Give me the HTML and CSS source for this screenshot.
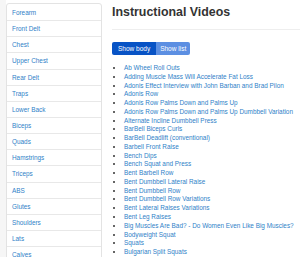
FILE: index.html
```html
<!DOCTYPE html>
<html>
<head>
<meta charset="utf-8">
<link rel="stylesheet" href="styles.css">
</head>
<body>
<div class="page">
  <aside class="side">
    <ul class="nav">
      <li><a href="#">Forearm</a></li>
      <li><a href="#">Front Delt</a></li>
      <li><a href="#">Chest</a></li>
      <li><a href="#">Upper Chest</a></li>
      <li><a href="#">Rear Delt</a></li>
      <li><a href="#">Traps</a></li>
      <li><a href="#">Lower Back</a></li>
      <li><a href="#">Biceps</a></li>
      <li><a href="#">Quads</a></li>
      <li><a href="#">Hamstrings</a></li>
      <li><a href="#">Triceps</a></li>
      <li><a href="#">ABS</a></li>
      <li><a href="#">Glutes</a></li>
      <li><a href="#">Shoulders</a></li>
      <li><a href="#">Lats</a></li>
      <li><a href="#">Calves</a></li>
    </ul>
  </aside>
  <main class="main">
    <h1 class="title">Instructional Videos</h1>
    <div class="btns">
      <button class="btn active">Show body</button><button class="btn">Show list</button>
    </div>
    <ul class="videos">
      <li><a href="#">Ab Wheel Roll Outs</a></li>
      <li><a href="#">Adding Muscle Mass Will Accelerate Fat Loss</a></li>
      <li><a href="#">Adonis Effect Interview with John Barban and Brad Pilon</a></li>
      <li><a href="#">Adonis Row</a></li>
      <li><a href="#">Adonis Row Palms Down and Palms Up</a></li>
      <li><a href="#">Adonis Row Palms Down and Palms Up Dumbbell Variation</a></li>
      <li><a href="#">Alternate Incline Dumbbell Press</a></li>
      <li><a href="#">BarBell Biceps Curls</a></li>
      <li><a href="#">BarBell Deadlift (conventional)</a></li>
      <li><a href="#">Barbell Front Raise</a></li>
      <li><a href="#">Bench Dips</a></li>
      <li><a href="#">Bench Squat and Press</a></li>
      <li><a href="#">Bent Barbell Row</a></li>
      <li><a href="#">Bent Dumbbell Lateral Raise</a></li>
      <li><a href="#">Bent Dumbbell Row</a></li>
      <li><a href="#">Bent Dumbbell Row Variations</a></li>
      <li><a href="#">Bent Lateral Raises Variations</a></li>
      <li><a href="#">Bent Leg Raises</a></li>
      <li><a href="#">Big Muscles Are Bad? - Do Women Even Like Big Muscles?</a></li>
      <li><a href="#">Bodyweight Squat</a></li>
      <li><a href="#">Squats</a></li>
      <li><a href="#">Bulgarian Split Squats</a></li>
    </ul>
  </main>
</div>
</body>
</html>
```

FILE: styles.css
```css
html, body {
  margin: 0;
  padding: 0;
  background: #fff;
  font-family: "Liberation Sans", Arial, sans-serif;
}
.page {
  display: flex;
  align-items: flex-start;
  height: 257px;
  overflow: hidden;
}
.side {
  width: 102px;
  flex: none;
  padding: 3px 0 0 6px;
  box-sizing: border-box;
  background: linear-gradient(to right, #f6f6f6 0, #f6f6f6 6px, #fff 6px);
  height: 257px;
}
.nav {
  list-style: none;
  margin: 0;
  padding: 0;
  background: #fff;
  border: 1px solid #e3e3e3;
  border-radius: 3px 3px 0 0;
}
.nav li {
  height: 16.15px;
  border-top: 1px solid #e8e8e8;
  box-sizing: border-box;
  display: flex;
  align-items: center;
  padding-left: 5px;
}
.nav li:first-child {
  border-top: none;
}
.nav a {
  color: #2f7fc8;
  text-decoration: none;
  font-size: 6.4px;
}
.main {
  flex: 1;
  min-width: 0;
  padding-left: 10px;
}
.title {
  margin: 5px 0 0 0;
  font-size: 12.4px;
  font-weight: bold;
  color: #333;
  line-height: 15px;
  padding-bottom: 9px;
  border-bottom: 1px solid #eee;
  white-space: nowrap;
}
.btns {
  display: flex;
  margin: 12px 0 0 0;
}
.btn {
  border: none;
  margin: 0;
  height: 13px;
  padding: 0 4px;
  font-family: "Liberation Sans", Arial, sans-serif;
  font-size: 6.5px;
  color: #fff;
  background: #5c8fe2;
  border-radius: 0 2px 2px 0;
}
.btn.active {
  background: #0853c5;
  border-radius: 2px 0 0 2px;
  padding: 0 6px;
}
.videos {
  margin: 9px 0 0 0;
  padding-left: 12px;
  font-size: 6.4px;
  line-height: 8.76px;
  color: #333;
  white-space: nowrap;
}
.videos a {
  color: #2f7fc8;
  text-decoration: none;
}
```
